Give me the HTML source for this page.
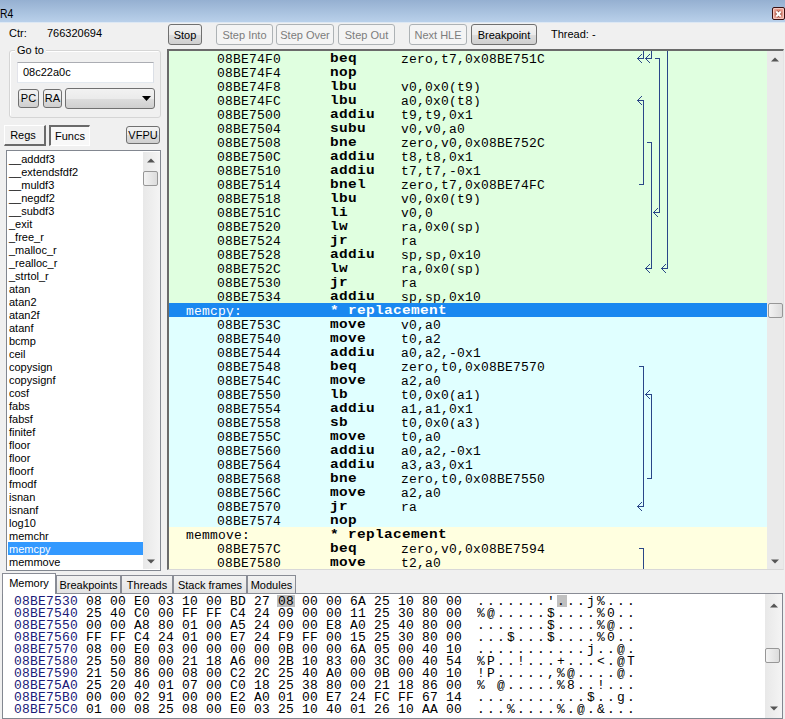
<!DOCTYPE html><html><head><meta charset="utf-8"><style>body{margin:0;width:785px;height:719px;background:#f0f0f0;position:relative;overflow:hidden;font-family:"Liberation Sans",sans-serif;font-size:11px;color:#000}
.a{position:absolute}
.ui{position:absolute;font-size:11px;line-height:13px;white-space:nowrap}
#title{position:absolute;left:0;top:0;width:785px;height:23px;background:linear-gradient(#95b0d1,#b9d0ea 95%,#dde8f4 96%)}
#tt{position:absolute;left:0px;top:7px;font-size:13px;line-height:14px;transform:scaleX(0.8);transform-origin:0 0}
#close{position:absolute;left:772px;top:7px;width:11px;height:11px;border:1px solid #3a1010;border-radius:2px;background:radial-gradient(ellipse at 50% 50%,#c8604a 0%,#e09080 45%,#f4c0b8 100%);box-shadow:inset 0 0 0 1px #f6c8c0}
#close svg{position:absolute;left:-1px;top:-1px}
#grp{position:absolute;left:9px;top:50px;width:150px;height:66px;border:1px solid #d5d5d5;border-radius:3px;box-shadow:inset 1px 1px 0 #fff}
#goto{position:absolute;left:17px;top:62px;width:135px;height:19px;background:#fff;border:1px solid #e3e9ef;border-top-color:#abadb3;border-left-color:#e2e3ea;border-right-color:#dbdfe6}
#goto span{position:absolute;left:5px;top:3px;font-size:11px;line-height:13px}
.btn{position:absolute;box-sizing:border-box;border:1px solid #707070;border-radius:3px;background:linear-gradient(#f2f2f2 0%,#ebebeb 50%,#dddddd 51%,#cfcfcf 100%);text-align:center;font-size:11px;line-height:17px;white-space:nowrap}
.btn.dis{border-color:#adb2b5;background:#f4f4f4;color:#7c7c7c}
#combo{position:absolute;box-sizing:border-box;left:65px;top:88px;width:90px;height:21px;border:1px solid #707070;border-radius:3px;background:linear-gradient(#f2f2f2 0%,#ebebeb 50%,#dddddd 51%,#cfcfcf 100%)}
.tab{position:absolute;box-sizing:border-box;border:1px solid #898c95;border-bottom:none;background:linear-gradient(#f2f2f2,#e3e3e3);text-align:center;font-size:11px;line-height:18px;white-space:nowrap}
.tab.sel{background:#fff;line-height:18px;z-index:2;height:21px!important}
#flist{position:absolute;left:6px;top:150px;width:155px;height:421px;box-sizing:border-box;border:1px solid #828790;background:#fff}
.fi{position:absolute;left:1px;width:135px;height:13px;font-size:11px;line-height:13px;padding-left:1px;padding-top:1px;box-sizing:border-box;white-space:nowrap}
.fi.sel{background:#3399ff;color:#fff}
#fsb{position:absolute;left:136px;top:1px;width:17px;height:417px;background:linear-gradient(90deg,#e8e8e8,#f4f4f4)}
#fthumb{position:absolute;left:0px;top:19px;width:15px;height:15px;box-sizing:border-box;border:1px solid #979797;border-radius:2px;background:linear-gradient(90deg,#f3f3f3,#dcdcdc)}
#dis{position:absolute;left:167px;top:49px;width:617px;height:521px;box-sizing:border-box;border:2px solid #6a6a6a;border-right:1px solid #e4e4e4;border-bottom:1px solid #d8d8d8;background:#e0ffe0;overflow:hidden}
.row{position:absolute;left:0;width:598px;height:14px;font-family:"Liberation Mono",monospace;font-size:12px;line-height:14px;letter-spacing:0.8px;white-space:pre}
.row span{top:2px}
.lab,.adr,.op{transform:scaleX(1.08);transform-origin:0 0;letter-spacing:0.2px}
.row.g{background:#e0ffe0}
.row.c{background:#e0ffff}
.row.y{background:#ffffe0}
.row.s{background:#1a88f0;color:#fff}
.lab{position:absolute;left:17px}
.adr{position:absolute;left:48px}
.mn{position:absolute;left:161px;font-weight:bold;letter-spacing:0.3px;transform:scaleX(1.2);transform-origin:0 0}
.row span.mn{top:1px}
.op{position:absolute;left:232px}
#dsb{position:absolute;left:598px;top:0;width:17px;height:519px;background:#eaeaea}
#dthumb{position:absolute;left:1px;top:252px;width:15px;height:15px;box-sizing:border-box;border:1px solid #979797;border-radius:2px;background:linear-gradient(90deg,#f3f3f3,#dcdcdc)}
#mem{position:absolute;left:2px;top:593px;width:781px;height:126px;box-sizing:border-box;border:1px solid #828790;border-top:none;background:#fff;overflow:hidden}
.mrow{position:absolute;left:0;width:760px;height:12px;font-family:"Liberation Mono",monospace;font-size:12px;line-height:12px;letter-spacing:0.8px;white-space:pre}
.madr{position:absolute;left:11px;color:#1a1a78}
.madr,.mb,.masc{transform:scaleX(1.08);transform-origin:0 0;letter-spacing:0.2px}
.mb{position:absolute}
.hl{background:#c0c0c0;display:inline-block;height:12px;vertical-align:top;margin-top:-1px}
.mb.hl{margin-left:-1px;padding:0 2px;width:14px;letter-spacing:0.8px;top:-1px;line-height:14px}
.masc{position:absolute;left:474px;letter-spacing:2.06px!important}
#msb{position:absolute;left:762px;top:1px;width:17px;height:124px;background:linear-gradient(90deg,#e8e8e8,#f4f4f4)}
#mthumb{position:absolute;left:0px;top:54px;width:15px;height:15px;box-sizing:border-box;border:1px solid #979797;border-radius:2px;background:linear-gradient(90deg,#f3f3f3,#dcdcdc)}

#regs{position:absolute;left:4px;top:125px;width:42px;height:21px;box-sizing:border-box;padding-right:3px;border-top:1px solid #fff;border-left:1px solid #fff;border-right:2px solid #6a6a6a;border-bottom:2px solid #6a6a6a;background:#f0f0f0;font-size:11px;line-height:18px;text-align:center}
#funcs{position:absolute;left:49px;top:125px;width:41px;height:21px;box-sizing:border-box;border-top:2px solid #6a6a6a;border-left:2px solid #6a6a6a;border-right:1px solid #fff;border-bottom:1px solid #fff;background:#f8f8f8;font-size:11px;line-height:18px;text-align:center}
</style></head><body><div id="title"><span id="tt">R4</span><div id="close"><svg width="13" height="13" viewBox="0 0 13 13"><path d="M4.2 4.5L8.8 9.5M8.8 4.5L4.2 9.5" stroke="#5a2018" stroke-width="3.4" stroke-opacity="0.55"/><path d="M4.2 4.5L8.8 9.5M8.8 4.5L4.2 9.5" stroke="#fff" stroke-width="2"/></svg></div></div><div class="a ui" style="left:9px;top:27px">Ctr:</div><div class="a ui" style="left:47px;top:27px">766320694</div><div id="grp"></div><div class="a ui" style="left:15px;top:44px;background:#f0f0f0;padding:0 2px">Go to</div><div id="goto"><span>08c22a0c</span></div><div class="btn" style="left:18px;top:89px;width:21px;height:19px">PC</div><div class="btn" style="left:43px;top:89px;width:19px;height:19px">RA</div><div id="combo"><svg class="a" style="left:76px;top:7px" width="9" height="5"><path d="M0 0H9L4.5 5Z" fill="#000"/></svg></div><div id="regs">Regs</div><div id="funcs">Funcs</div><div class="btn" style="left:126px;top:126px;width:34px;height:18px">VFPU</div><div id="flist"><div class="fi" style="top:1px">__adddf3</div><div class="fi" style="top:14px">__extendsfdf2</div><div class="fi" style="top:27px">__muldf3</div><div class="fi" style="top:40px">__negdf2</div><div class="fi" style="top:53px">__subdf3</div><div class="fi" style="top:66px">_exit</div><div class="fi" style="top:79px">_free_r</div><div class="fi" style="top:92px">_malloc_r</div><div class="fi" style="top:105px">_realloc_r</div><div class="fi" style="top:118px">_strtol_r</div><div class="fi" style="top:131px">atan</div><div class="fi" style="top:144px">atan2</div><div class="fi" style="top:157px">atan2f</div><div class="fi" style="top:170px">atanf</div><div class="fi" style="top:183px">bcmp</div><div class="fi" style="top:196px">ceil</div><div class="fi" style="top:209px">copysign</div><div class="fi" style="top:222px">copysignf</div><div class="fi" style="top:235px">cosf</div><div class="fi" style="top:248px">fabs</div><div class="fi" style="top:261px">fabsf</div><div class="fi" style="top:274px">finitef</div><div class="fi" style="top:287px">floor</div><div class="fi" style="top:300px">floor</div><div class="fi" style="top:313px">floorf</div><div class="fi" style="top:326px">fmodf</div><div class="fi" style="top:339px">isnan</div><div class="fi" style="top:352px">isnanf</div><div class="fi" style="top:365px">log10</div><div class="fi" style="top:378px">memchr</div><div class="fi sel" style="top:391px">memcpy</div><div class="fi" style="top:404px">memmove</div><div id="fsb"><svg class="a" style="left:4px;top:6px" width="8" height="5"><path d="M0 4.5L4 0.5L8 4.5Z" fill="#555"/></svg><div id="fthumb"></div><svg class="a" style="left:4px;top:407px" width="8" height="5"><path d="M0 0.5L4 4.5L8 0.5Z" fill="#555"/></svg></div></div><div class="btn" style="left:168px;top:24px;width:34px;height:21px;line-height:21px">Stop</div><div class="btn dis" style="left:216px;top:24px;width:57px;height:21px;line-height:21px">Step Into</div><div class="btn dis" style="left:276px;top:24px;width:58px;height:21px;line-height:21px">Step Over</div><div class="btn dis" style="left:338px;top:24px;width:57px;height:21px;line-height:21px">Step Out</div><div class="btn dis" style="left:409px;top:24px;width:58px;height:21px;line-height:21px">Next HLE</div><div class="btn" style="left:471px;top:24px;width:66px;height:21px;line-height:21px">Breakpoint</div><div class="a ui" style="left:551px;top:28px">Thread: -</div><div id="dis"><div class="row g" style="top:0px"><span class="adr">08BE74F0</span><span class="mn">beq</span><span class="op">zero,t7,0x08BE751C</span></div><div class="row g" style="top:14px"><span class="adr">08BE74F4</span><span class="mn">nop</span></div><div class="row g" style="top:28px"><span class="adr">08BE74F8</span><span class="mn">lbu</span><span class="op">v0,0x0(t9)</span></div><div class="row g" style="top:42px"><span class="adr">08BE74FC</span><span class="mn">lbu</span><span class="op">a0,0x0(t8)</span></div><div class="row g" style="top:56px"><span class="adr">08BE7500</span><span class="mn">addiu</span><span class="op">t9,t9,0x1</span></div><div class="row g" style="top:70px"><span class="adr">08BE7504</span><span class="mn">subu</span><span class="op">v0,v0,a0</span></div><div class="row g" style="top:84px"><span class="adr">08BE7508</span><span class="mn">bne</span><span class="op">zero,v0,0x08BE752C</span></div><div class="row g" style="top:98px"><span class="adr">08BE750C</span><span class="mn">addiu</span><span class="op">t8,t8,0x1</span></div><div class="row g" style="top:112px"><span class="adr">08BE7510</span><span class="mn">addiu</span><span class="op">t7,t7,-0x1</span></div><div class="row g" style="top:126px"><span class="adr">08BE7514</span><span class="mn">bnel</span><span class="op">zero,t7,0x08BE74FC</span></div><div class="row g" style="top:140px"><span class="adr">08BE7518</span><span class="mn">lbu</span><span class="op">v0,0x0(t9)</span></div><div class="row g" style="top:154px"><span class="adr">08BE751C</span><span class="mn">li</span><span class="op">v0,0</span></div><div class="row g" style="top:168px"><span class="adr">08BE7520</span><span class="mn">lw</span><span class="op">ra,0x0(sp)</span></div><div class="row g" style="top:182px"><span class="adr">08BE7524</span><span class="mn">jr</span><span class="op">ra</span></div><div class="row g" style="top:196px"><span class="adr">08BE7528</span><span class="mn">addiu</span><span class="op">sp,sp,0x10</span></div><div class="row g" style="top:210px"><span class="adr">08BE752C</span><span class="mn">lw</span><span class="op">ra,0x0(sp)</span></div><div class="row g" style="top:224px"><span class="adr">08BE7530</span><span class="mn">jr</span><span class="op">ra</span></div><div class="row g" style="top:238px"><span class="adr">08BE7534</span><span class="mn">addiu</span><span class="op">sp,sp,0x10</span></div><div class="row s" style="top:252px"><span class="lab">memcpy:</span><span class="mn">* replacement</span></div><div class="row c" style="top:266px"><span class="adr">08BE753C</span><span class="mn">move</span><span class="op">v0,a0</span></div><div class="row c" style="top:280px"><span class="adr">08BE7540</span><span class="mn">move</span><span class="op">t0,a2</span></div><div class="row c" style="top:294px"><span class="adr">08BE7544</span><span class="mn">addiu</span><span class="op">a0,a2,-0x1</span></div><div class="row c" style="top:308px"><span class="adr">08BE7548</span><span class="mn">beq</span><span class="op">zero,t0,0x08BE7570</span></div><div class="row c" style="top:322px"><span class="adr">08BE754C</span><span class="mn">move</span><span class="op">a2,a0</span></div><div class="row c" style="top:336px"><span class="adr">08BE7550</span><span class="mn">lb</span><span class="op">t0,0x0(a1)</span></div><div class="row c" style="top:350px"><span class="adr">08BE7554</span><span class="mn">addiu</span><span class="op">a1,a1,0x1</span></div><div class="row c" style="top:364px"><span class="adr">08BE7558</span><span class="mn">sb</span><span class="op">t0,0x0(a3)</span></div><div class="row c" style="top:378px"><span class="adr">08BE755C</span><span class="mn">move</span><span class="op">t0,a0</span></div><div class="row c" style="top:392px"><span class="adr">08BE7560</span><span class="mn">addiu</span><span class="op">a0,a2,-0x1</span></div><div class="row c" style="top:406px"><span class="adr">08BE7564</span><span class="mn">addiu</span><span class="op">a3,a3,0x1</span></div><div class="row c" style="top:420px"><span class="adr">08BE7568</span><span class="mn">bne</span><span class="op">zero,t0,0x08BE7550</span></div><div class="row c" style="top:434px"><span class="adr">08BE756C</span><span class="mn">move</span><span class="op">a2,a0</span></div><div class="row c" style="top:448px"><span class="adr">08BE7570</span><span class="mn">jr</span><span class="op">ra</span></div><div class="row c" style="top:462px"><span class="adr">08BE7574</span><span class="mn">nop</span></div><div class="row y" style="top:476px"><span class="lab">memmove:</span><span class="mn">* replacement</span></div><div class="row y" style="top:490px"><span class="adr">08BE757C</span><span class="mn">beq</span><span class="op">zero,v0,0x08BE7594</span></div><div class="row y" style="top:504px"><span class="adr">08BE7580</span><span class="mn">move</span><span class="op">t2,a0</span></div><div id="dsb"><svg class="a" style="left:4px;top:6px" width="8" height="5"><path d="M0 4.5L4 0.5L8 4.5Z" fill="#555"/></svg><div id="dthumb"></div><svg class="a" style="left:4px;top:508px" width="8" height="5"><path d="M0 0.5L4 4.5L8 0.5Z" fill="#555"/></svg></div></div><svg class="a" style="left:0;top:0" width="785" height="719"><path d="M643.5 51V58.5H637 M651.5 51V58.5H645 M655 58.5H659.5V212.5 M659.5 58.5V212.5H653 M667.5 51V268.5H661 M643.5 184.5V100.5H637 M639 184.5H643.5V100.5 M647 142.5H651.5V268.5 M651.5 142.5V268.5H645 M639 366.5H643.5V506.5 M643.5 366.5V506.5H637 M651.5 478.5V394.5H645 M647 478.5H651.5V394.5 M639 548.5H643.5V569" stroke="#2a4688" stroke-width="1" fill="none" shape-rendering="crispEdges"/><path d="M638 57h1v1h-1z M638 59h1v1h-1z M639 56h1v1h-1z M639 60h1v1h-1z M640 55h1v1h-1z M640 61h1v1h-1z M641 54h1v1h-1z M641 62h1v1h-1z M646 57h1v1h-1z M646 59h1v1h-1z M647 56h1v1h-1z M647 60h1v1h-1z M648 55h1v1h-1z M648 61h1v1h-1z M649 54h1v1h-1z M649 62h1v1h-1z M654 211h1v1h-1z M654 213h1v1h-1z M655 210h1v1h-1z M655 214h1v1h-1z M656 209h1v1h-1z M656 215h1v1h-1z M657 208h1v1h-1z M657 216h1v1h-1z M662 267h1v1h-1z M662 269h1v1h-1z M663 266h1v1h-1z M663 270h1v1h-1z M664 265h1v1h-1z M664 271h1v1h-1z M665 264h1v1h-1z M665 272h1v1h-1z M638 99h1v1h-1z M638 101h1v1h-1z M639 98h1v1h-1z M639 102h1v1h-1z M640 97h1v1h-1z M640 103h1v1h-1z M641 96h1v1h-1z M641 104h1v1h-1z M646 267h1v1h-1z M646 269h1v1h-1z M647 266h1v1h-1z M647 270h1v1h-1z M648 265h1v1h-1z M648 271h1v1h-1z M649 264h1v1h-1z M649 272h1v1h-1z M638 505h1v1h-1z M638 507h1v1h-1z M639 504h1v1h-1z M639 508h1v1h-1z M640 503h1v1h-1z M640 509h1v1h-1z M641 502h1v1h-1z M641 510h1v1h-1z M646 393h1v1h-1z M646 395h1v1h-1z M647 392h1v1h-1z M647 396h1v1h-1z M648 391h1v1h-1z M648 397h1v1h-1z M649 390h1v1h-1z M649 398h1v1h-1z" fill="#2a4688" shape-rendering="crispEdges"/></svg><div class="tab sel" style="left:2px;top:573px;width:54px;height:21px">Memory</div><div class="tab" style="left:56px;top:575px;width:65px;height:18px">Breakpoints</div><div class="tab" style="left:121px;top:575px;width:52px;height:18px">Threads</div><div class="tab" style="left:173px;top:575px;width:74px;height:18px">Stack frames</div><div class="tab" style="left:247px;top:575px;width:49px;height:18px">Modules</div><div id="mem"><div class="a" style="left:53px;top:0;width:730px;height:1px;background:#898c95"></div><div class="mrow" style="top:3px"><div class="a" style="left:274px;top:-1px;width:18px;height:12px;background:#c0c0c0"></div><div class="a" style="left:554px;top:-1px;width:10px;height:12px;background:#c0c0c0"></div><span class="madr">08BE7530</span><span class="mb" style="left:83px">08</span><span class="mb" style="left:107px">00</span><span class="mb" style="left:131px">E0</span><span class="mb" style="left:155px">03</span><span class="mb" style="left:179px">10</span><span class="mb" style="left:203px">00</span><span class="mb" style="left:227px">BD</span><span class="mb" style="left:251px">27</span><span class="mb" style="left:275px">08</span><span class="mb" style="left:299px">00</span><span class="mb" style="left:323px">00</span><span class="mb" style="left:347px">6A</span><span class="mb" style="left:371px">25</span><span class="mb" style="left:395px">10</span><span class="mb" style="left:419px">80</span><span class="mb" style="left:443px">00</span><span class="masc">.......'...j%...</span></div><div class="mrow" style="top:15px"><span class="madr">08BE7540</span><span class="mb" style="left:83px">25</span><span class="mb" style="left:107px">40</span><span class="mb" style="left:131px">C0</span><span class="mb" style="left:155px">00</span><span class="mb" style="left:179px">FF</span><span class="mb" style="left:203px">FF</span><span class="mb" style="left:227px">C4</span><span class="mb" style="left:251px">24</span><span class="mb" style="left:275px">09</span><span class="mb" style="left:299px">00</span><span class="mb" style="left:323px">00</span><span class="mb" style="left:347px">11</span><span class="mb" style="left:371px">25</span><span class="mb" style="left:395px">30</span><span class="mb" style="left:419px">80</span><span class="mb" style="left:443px">00</span><span class="masc">%@.....$....%0..</span></div><div class="mrow" style="top:27px"><span class="madr">08BE7550</span><span class="mb" style="left:83px">00</span><span class="mb" style="left:107px">00</span><span class="mb" style="left:131px">A8</span><span class="mb" style="left:155px">80</span><span class="mb" style="left:179px">01</span><span class="mb" style="left:203px">00</span><span class="mb" style="left:227px">A5</span><span class="mb" style="left:251px">24</span><span class="mb" style="left:275px">00</span><span class="mb" style="left:299px">00</span><span class="mb" style="left:323px">E8</span><span class="mb" style="left:347px">A0</span><span class="mb" style="left:371px">25</span><span class="mb" style="left:395px">40</span><span class="mb" style="left:419px">80</span><span class="mb" style="left:443px">00</span><span class="masc">.......$....%@..</span></div><div class="mrow" style="top:39px"><span class="madr">08BE7560</span><span class="mb" style="left:83px">FF</span><span class="mb" style="left:107px">FF</span><span class="mb" style="left:131px">C4</span><span class="mb" style="left:155px">24</span><span class="mb" style="left:179px">01</span><span class="mb" style="left:203px">00</span><span class="mb" style="left:227px">E7</span><span class="mb" style="left:251px">24</span><span class="mb" style="left:275px">F9</span><span class="mb" style="left:299px">FF</span><span class="mb" style="left:323px">00</span><span class="mb" style="left:347px">15</span><span class="mb" style="left:371px">25</span><span class="mb" style="left:395px">30</span><span class="mb" style="left:419px">80</span><span class="mb" style="left:443px">00</span><span class="masc">...$...$....%0..</span></div><div class="mrow" style="top:51px"><span class="madr">08BE7570</span><span class="mb" style="left:83px">08</span><span class="mb" style="left:107px">00</span><span class="mb" style="left:131px">E0</span><span class="mb" style="left:155px">03</span><span class="mb" style="left:179px">00</span><span class="mb" style="left:203px">00</span><span class="mb" style="left:227px">00</span><span class="mb" style="left:251px">00</span><span class="mb" style="left:275px">0B</span><span class="mb" style="left:299px">00</span><span class="mb" style="left:323px">00</span><span class="mb" style="left:347px">6A</span><span class="mb" style="left:371px">05</span><span class="mb" style="left:395px">00</span><span class="mb" style="left:419px">40</span><span class="mb" style="left:443px">10</span><span class="masc">...........j..@.</span></div><div class="mrow" style="top:63px"><span class="madr">08BE7580</span><span class="mb" style="left:83px">25</span><span class="mb" style="left:107px">50</span><span class="mb" style="left:131px">80</span><span class="mb" style="left:155px">00</span><span class="mb" style="left:179px">21</span><span class="mb" style="left:203px">18</span><span class="mb" style="left:227px">A6</span><span class="mb" style="left:251px">00</span><span class="mb" style="left:275px">2B</span><span class="mb" style="left:299px">10</span><span class="mb" style="left:323px">83</span><span class="mb" style="left:347px">00</span><span class="mb" style="left:371px">3C</span><span class="mb" style="left:395px">00</span><span class="mb" style="left:419px">40</span><span class="mb" style="left:443px">54</span><span class="masc">%P..!...+...&lt;.@T</span></div><div class="mrow" style="top:75px"><span class="madr">08BE7590</span><span class="mb" style="left:83px">21</span><span class="mb" style="left:107px">50</span><span class="mb" style="left:131px">86</span><span class="mb" style="left:155px">00</span><span class="mb" style="left:179px">08</span><span class="mb" style="left:203px">00</span><span class="mb" style="left:227px">C2</span><span class="mb" style="left:251px">2C</span><span class="mb" style="left:275px">25</span><span class="mb" style="left:299px">40</span><span class="mb" style="left:323px">A0</span><span class="mb" style="left:347px">00</span><span class="mb" style="left:371px">0B</span><span class="mb" style="left:395px">00</span><span class="mb" style="left:419px">40</span><span class="mb" style="left:443px">10</span><span class="masc">!P.....,%@....@.</span></div><div class="mrow" style="top:87px"><span class="madr">08BE75A0</span><span class="mb" style="left:83px">25</span><span class="mb" style="left:107px">20</span><span class="mb" style="left:131px">40</span><span class="mb" style="left:155px">01</span><span class="mb" style="left:179px">07</span><span class="mb" style="left:203px">00</span><span class="mb" style="left:227px">C0</span><span class="mb" style="left:251px">18</span><span class="mb" style="left:275px">25</span><span class="mb" style="left:299px">38</span><span class="mb" style="left:323px">80</span><span class="mb" style="left:347px">00</span><span class="mb" style="left:371px">21</span><span class="mb" style="left:395px">18</span><span class="mb" style="left:419px">86</span><span class="mb" style="left:443px">00</span><span class="masc">% @.....%8..!...</span></div><div class="mrow" style="top:99px"><span class="madr">08BE75B0</span><span class="mb" style="left:83px">00</span><span class="mb" style="left:107px">00</span><span class="mb" style="left:131px">02</span><span class="mb" style="left:155px">91</span><span class="mb" style="left:179px">00</span><span class="mb" style="left:203px">00</span><span class="mb" style="left:227px">E2</span><span class="mb" style="left:251px">A0</span><span class="mb" style="left:275px">01</span><span class="mb" style="left:299px">00</span><span class="mb" style="left:323px">E7</span><span class="mb" style="left:347px">24</span><span class="mb" style="left:371px">FC</span><span class="mb" style="left:395px">FF</span><span class="mb" style="left:419px">67</span><span class="mb" style="left:443px">14</span><span class="masc">...........$..g.</span></div><div class="mrow" style="top:111px"><span class="madr">08BE75C0</span><span class="mb" style="left:83px">01</span><span class="mb" style="left:107px">00</span><span class="mb" style="left:131px">08</span><span class="mb" style="left:155px">25</span><span class="mb" style="left:179px">08</span><span class="mb" style="left:203px">00</span><span class="mb" style="left:227px">E0</span><span class="mb" style="left:251px">03</span><span class="mb" style="left:275px">25</span><span class="mb" style="left:299px">10</span><span class="mb" style="left:323px">40</span><span class="mb" style="left:347px">01</span><span class="mb" style="left:371px">26</span><span class="mb" style="left:395px">10</span><span class="mb" style="left:419px">AA</span><span class="mb" style="left:443px">00</span><span class="masc">...%....%.@.&amp;...</span></div><div id="msb"><svg class="a" style="left:5px;top:9px" width="8" height="5"><path d="M0 4.5L4 0.5L8 4.5Z" fill="#555"/></svg><div id="mthumb"></div><svg class="a" style="left:5px;top:112px" width="8" height="5"><path d="M0 0.5L4 4.5L8 0.5Z" fill="#555"/></svg></div></div></body></html>
